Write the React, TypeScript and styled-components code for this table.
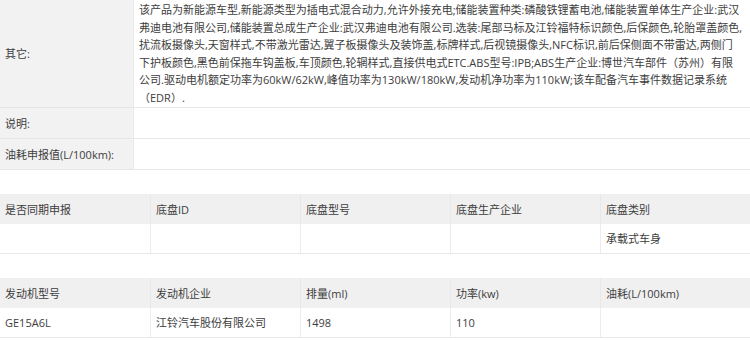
import React from 'react';
import styled, { createGlobalStyle } from 'styled-components';

const GlobalStyle = createGlobalStyle`
  html, body {
    margin: 0;
    padding: 0;
    background: #ffffff;
  }
  body {
    font-family: "Open Sans", "Noto Sans CJK SC", sans-serif;
    font-size: 11px;
    color: #3d3d3d;
  }
`;

const Page = styled.div`
  width: 750px;
  display: flex;
  flex-direction: column;
  gap: 24px;
`;

/* top key/value table */
const InfoTable = styled.div`
  display: grid;
  grid-template-columns: 134px 1fr;
`;

const InfoLabel = styled.div<{ $h?: number }>`
  background-color: #f2f2f2;
  border-bottom: 1px solid #e6e6e6;
  border-right: 1px solid #e9e9e9;
  padding: 0 5px;
  display: flex;
  align-items: center;
  height: ${(p) => (p.$h ? `${p.$h}px` : 'auto')};
`;

const InfoValue = styled.div`
  border-bottom: 1px solid #e6e6e6;
  padding: 1px 5px 0 5px;
  line-height: 17.6px;
  white-space: nowrap;
  overflow: hidden;
`;

const Line = styled.div`
  height: 17.6px;
`;

/* column tables */
const GridTable = styled.div`
  display: grid;
  grid-template-columns: 150px 150px 150px 150px 150px;
`;

const HeadCell = styled.div`
  background-color: #f0f0f0;
  height: 30px;
  padding: 0 5px;
  display: flex;
  align-items: center;
  border-left: 1px solid #e8e8e8;
  box-sizing: border-box;

  &:first-child {
    border-left: none;
  }
`;

const BodyCell = styled.div<{ $first?: boolean }>`
  height: 30px;
  padding: 0 5px;
  display: flex;
  align-items: center;
  border-bottom: 1px solid #e8e8e8;
  border-left: ${(p) => (p.$first ? 'none' : '1px solid #ececec')};
  box-sizing: border-box;
`;

const otherLines = [
  '该产品为新能源车型,新能源类型为插电式混合动力,允许外接充电;储能装置种类:磷酸铁锂蓄电池,储能装置单体生产企业:武汉',
  '弗迪电池有限公司,储能装置总成生产企业:武汉弗迪电池有限公司.选装:尾部马标及江铃福特标识颜色,后保颜色,轮胎罩盖颜色,',
  '扰流板摄像头,天窗样式,不带激光雷达,翼子板摄像头及装饰盖,标牌样式,后视镜摄像头,NFC标识,前后保侧面不带雷达,两侧门',
  '下护板颜色,黑色前保拖车钩盖板,车顶颜色,轮辋样式,直接供电式ETC.ABS型号:IPB;ABS生产企业:博世汽车部件（苏州）有限',
  '公司.驱动电机额定功率为60kW/62kW,峰值功率为130kW/180kW,发动机净功率为110kW;该车配备汽车事件数据记录系统',
  '（EDR）.',
];

const chassisHead = ['是否同期申报', '底盘ID', '底盘型号', '底盘生产企业', '底盘类别'];
const chassisRow = ['', '', '', '', '承载式车身'];

const engineHead = ['发动机型号', '发动机企业', '排量(ml)', '功率(kw)', '油耗(L/100km)'];
const engineRow = ['GE15A6L', '江铃汽车股份有限公司', '1498', '110', ''];

function ColumnTable({ head, row }: { head: string[]; row: string[] }) {
  return (
    <GridTable>
      {head.map((h) => (
        <HeadCell key={h}>{h}</HeadCell>
      ))}
      {row.map((v, i) => (
        <BodyCell key={i} $first={i === 0}>
          {v}
        </BodyCell>
      ))}
    </GridTable>
  );
}

export default function App() {
  return (
    <>
      <GlobalStyle />
      <Page>
        <InfoTable>
          <InfoLabel>其它:</InfoLabel>
          <InfoValue>
            {otherLines.map((l) => (
              <Line key={l}>{l}</Line>
            ))}
          </InfoValue>
          <InfoLabel $h={30}>说明:</InfoLabel>
          <InfoValue />
          <InfoLabel $h={30}>油耗申报值(L/100km):</InfoLabel>
          <InfoValue />
        </InfoTable>

        <ColumnTable head={chassisHead} row={chassisRow} />
        <ColumnTable head={engineHead} row={engineRow} />
      </Page>
    </>
  );
}
